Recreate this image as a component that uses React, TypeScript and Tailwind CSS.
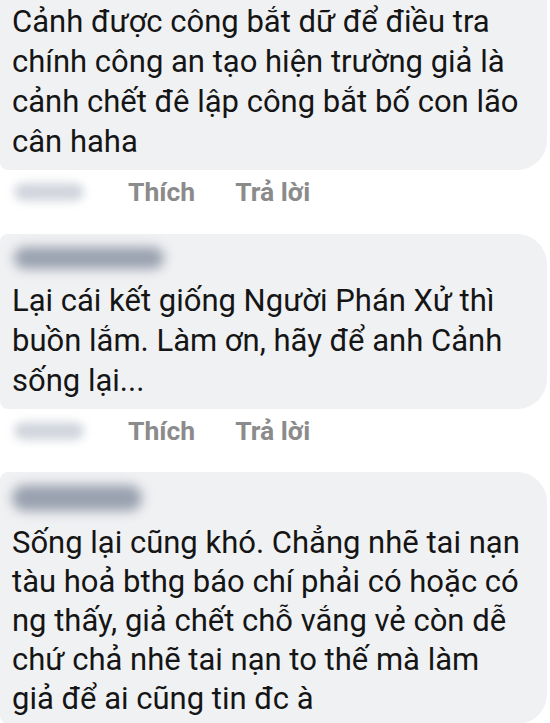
const comments = [
  [
    "Cảnh được công bắt dữ để điều tra",
    "chính công an tạo hiện trường giả là",
    "cảnh chết đê lập công bắt bố con lão",
    "cân haha",
  ],
  [
    "Lại cái kết giống Người Phán Xử thì",
    "buồn lắm. Làm ơn, hãy để anh Cảnh",
    "sống lại...",
  ],
  [
    "Sống lại cũng khó. Chẳng nhẽ tai nạn",
    "tàu hoả bthg báo chí phải có hoặc có",
    "ng thấy, giả chết chỗ vắng vẻ còn dễ",
    "chứ chả nhẽ tai nạn to thế mà làm",
    "giả để ai cũng tin đc à",
  ],
];

const Lines = ({ lines }: { lines: string[] }) => (
  <>
    {lines.map((line, i) => (
      <div key={i} className="whitespace-nowrap">
        {line}
      </div>
    ))}
  </>
);

const Actions = () => (
  <div className="flex h-[44px] items-center pl-[14px]">
    <div className="h-[18px] w-[70px] rounded-full bg-gray-300 blur-[5px]" />
    <span className="ml-[44px] text-[26.5px] font-bold text-[#8b8b8b]">Thích</span>
    <span className="ml-[40px] text-[26.5px] font-bold text-[#8b8b8b]">Trả lời</span>
  </div>
);

const App = () => {
  return (
    <div className="h-[723px] w-[550px] overflow-hidden bg-white font-['Roboto',sans-serif] text-[31px] leading-[40px] text-[#151515]">
      {/* bình luận 1 */}
      <div className="-mt-[28px] mr-[3px] rounded-[30px] rounded-l-[8px] bg-[#f0f1f3] pt-[30px] pb-[8px] pl-[12px] pr-[20px]">
        <Lines lines={comments[0]} />
      </div>
      <Actions />

      {/* bình luận 2 */}
      <div className="mt-[20px] mr-[3px] rounded-[30px] rounded-l-[8px] bg-[#f0f1f3] pt-[13px] pb-[8px] pl-[12px] pr-[20px]">
        <div className="ml-[2px] h-[22px] w-[150px] rounded-full bg-gray-400 blur-[6px]" />
        <div className="mt-[12px]">
          <Lines lines={comments[1]} />
        </div>
      </div>
      <Actions />

      {/* bình luận 3 */}
      <div className="mt-[19px] mr-[3px] rounded-[30px] rounded-l-[8px] bg-[#f0f1f3] pt-[13px] pb-[6px] pl-[12px] pr-[20px] leading-[39px]">
        <div className="h-[26px] w-[130px] rounded-full bg-gray-400 blur-[6px]" />
        <div className="mt-[12px]">
          <Lines lines={comments[2]} />
        </div>
      </div>
    </div>
  );
};

export default App;
